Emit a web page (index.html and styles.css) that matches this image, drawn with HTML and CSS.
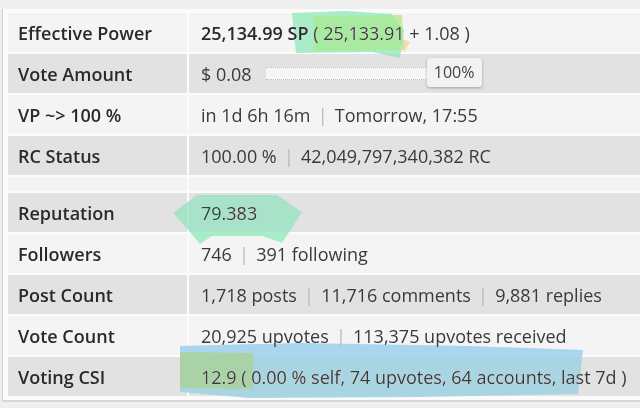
FILE: index.html
```html
<!DOCTYPE html>
<html>
<head>
<meta charset="utf-8">
<link rel="stylesheet" href="styles.css">
</head>
<body>
<div class="panel">
  <table class="stats">
    <tr class="odd"><th>Effective Power</th><td><b>25,134.99 SP</b> ( 25,133.91 + 1.08 )</td></tr>
    <tr class="even"><th>Vote Amount</th><td><div class="vote"><span>$ 0.08</span><div class="slider"><div class="track"></div><div class="knob">100%</div></div></div></td></tr>
    <tr class="odd"><th>VP ~&gt; 100 %</th><td>in 1d 6h 16m <span class="sep">|</span> Tomorrow, 17:55</td></tr>
    <tr class="even"><th>RC Status</th><td>100.00 % <span class="sep">|</span> 42,049,797,340,382 RC</td></tr>
    <tr class="spacer"><th></th><td></td></tr>
    <tr class="even"><th>Reputation</th><td><span class="rep">79</span>.383</td></tr>
    <tr class="odd"><th>Followers</th><td>746 <span class="sep">|</span> 391 following</td></tr>
    <tr class="even"><th>Post Count</th><td>1,718 posts <span class="sep">|</span> 11,716 comments <span class="sep">|</span> 9,881 replies</td></tr>
    <tr class="odd"><th>Vote Count</th><td>20,925 upvotes <span class="sep">|</span> 113,375 upvotes received</td></tr>
    <tr class="even"><th>Voting CSI</th><td>12.9 ( 0.00 % self, 74 upvotes, 64 accounts, last 7d )</td></tr>
  </table>
  <svg class="marks" width="640" height="408" viewBox="0 0 640 408">
    <polygon class="mint" points="292,13 345,11 392,14 404,30 400,58 372,52 296,53"/>
    <polygon class="yellow" points="313,16 402,15 404,50 314,51"/>
    <polygon class="orange" points="400,38 410,42 404,52"/>
    <polygon class="mint" points="173,213 197,195 277,195 302,212 282,243 262,236 212,236 200,244 190,232"/>
    <polygon class="blue" points="180,346 300,343 470,346 583,350 578,394 420,397 250,398 180,392"/>
    <polygon class="yellow2" points="180,352 253,353 253,389 180,388"/>
  </svg>
</div>
</body>
</html>
```
FILE: styles.css
```css
html, body {
  margin: 0;
  padding: 0;
}
body {
  background: #efefef;
  font-family: "Open Sans", "Noto Sans", sans-serif;
  width: 640px;
  height: 408px;
  overflow: hidden;
}
.panel {
  position: relative;
  box-sizing: border-box;
  margin: 9px 0 0 2px;
  padding: 2px 0 2px 3px;
  background: #fbfbfb;
  border-left: 1px solid #d0d0d0;
  border-bottom: 2px solid #d6d6d6;
  width: 638px;
  overflow: hidden;
}
.stats {
  border-collapse: separate;
  border-spacing: 2px;
  width: 660px;
}
.stats th, .stats td {
  height: 39px;
  padding: 0 12px;
  font-size: 18px;
  color: #333;
  text-align: left;
  white-space: nowrap;
}
.stats th {
  width: 157px;
  padding-left: 10px;
  font-size: 18px;
  font-weight: 600;
  color: #2a2a2a;
}
.stats td {
  font-weight: 400;
  color: #3a3a3a;
}
.stats td b {
  font-weight: 600;
  color: #2a2a2a;
}
.odd th, .odd td {
  background: #f4f4f4;
}
.even th, .even td {
  background: #e2e2e2;
}
.spacer th, .spacer td {
  height: 14px;
  padding: 0;
  background: #f4f4f4;
}
.sep {
  color: #b8b8b8;
  margin: 0 2.5px;
}
.rep {
  color: #1f4a33;
}
.vote {
  display: flex;
  align-items: center;
  gap: 14px;
}
.slider {
  display: flex;
  align-items: center;
  position: relative;
  width: 220px;
}
.track {
  width: 170px;
  height: 11px;
  background: #f6f6f6;
  border-top: 1px dotted #bdbdbd;
  border-bottom: 1px dotted #bdbdbd;
}
.knob {
  position: absolute;
  left: 161px;
  top: -9px;
  width: 55px;
  height: 29px;
  line-height: 29px;
  text-align: center;
  font-size: 16px;
  color: #444;
  background: #f2f2f2;
  border-radius: 3px;
  box-shadow: 0 1px 3px rgba(0,0,0,0.3);
}
.marks {
  position: absolute;
  left: -3px;
  top: -9px;
  pointer-events: none;
}
.mint {
  fill: #a8ecc8;
  mix-blend-mode: darken;
}
.yellow {
  fill: #c8eaa0;
  mix-blend-mode: darken;
}
.orange {
  fill: #f2dca8;
  mix-blend-mode: darken;
}
.blue {
  fill: #a9d5ef;
  mix-blend-mode: darken;
}
.yellow2 {
  fill: #b4d3a6;
  mix-blend-mode: darken;
}
```
